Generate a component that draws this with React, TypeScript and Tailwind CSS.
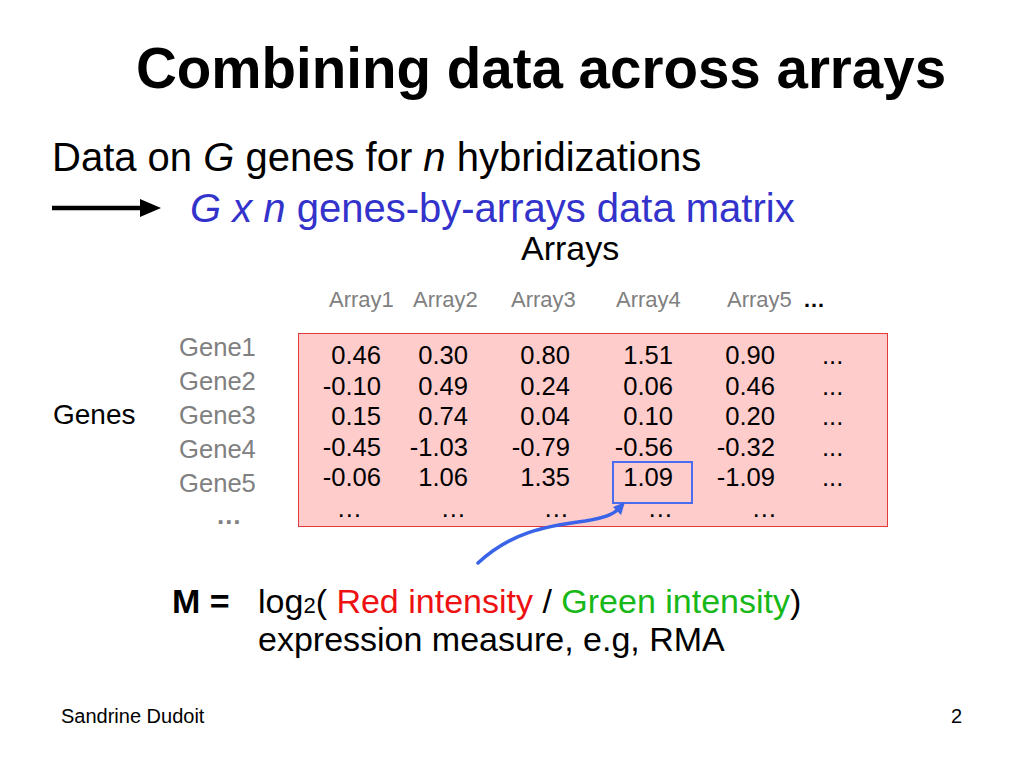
import React from 'react';

const values: string[][] = [
  ['0.46', '0.30', '0.80', '1.51', '0.90', '...'],
  ['-0.10', '0.49', '0.24', '0.06', '0.46', '...'],
  ['0.15', '0.74', '0.04', '0.10', '0.20', '...'],
  ['-0.45', '-1.03', '-0.79', '-0.56', '-0.32', '...'],
  ['-0.06', '1.06', '1.35', '1.09', '-1.09', '...'],
];

const genes = ['Gene1', 'Gene2', 'Gene3', 'Gene4', 'Gene5'];

// column right edges inside the pink box (box starts at x=299)
const colCls = [
  'w-[82px] text-right',
  'w-[87px] text-right',
  'w-[102px] text-right',
  'w-[103px] text-right',
  'w-[102px] text-right',
  'w-[70px] pl-[47px] text-left',
];

export default function App() {
  return (
    <div className="relative w-[1024px] h-[768px] bg-white text-black flex flex-col overflow-hidden font-['Liberation_Sans',Arial,Helvetica,sans-serif]">
      <h1 className="pt-[40px] pl-[136px] text-[56.5px] leading-[57px] font-bold">
        Combining data across arrays
      </h1>

      <p className="mt-[40px] pl-[52px] text-[40px] leading-[40px]">
        Data on <i>G</i> genes for <i>n</i> hybridizations
      </p>

      <div className="mt-[11px] flex items-center pl-[52px]">
        <svg width="110" height="40" viewBox="0 0 110 40" className="shrink-0">
          <line x1="0" y1="20" x2="92" y2="20" stroke="black" strokeWidth="4.5" />
          <polygon points="88,11 109,20 88,29" fill="black" />
        </svg>
        <p className="ml-[28px] text-[40px] leading-[40px] text-[#3333cc]">
          <i>G x n</i> genes-by-arrays data matrix
        </p>
      </div>

      <p className="mt-[3px] pl-[521px] text-[34px] leading-[34px]">Arrays</p>

      <div className="mt-[24px] flex pl-[329px] text-[22px] leading-[22px] text-[#808080]">
        <span className="w-[84px]">Array1</span>
        <span className="w-[98px]">Array2</span>
        <span className="w-[105px]">Array3</span>
        <span className="w-[111px]">Array4</span>
        <span className="w-[76px]">Array5</span>
        <span className="font-bold text-black">…</span>
      </div>

      <div className="mt-[22px] flex items-start">
        <span className="ml-[53px] mt-[68px] w-[126px] text-[28px] leading-[28px]">Genes</span>
        <div className="-mt-[3px] w-[119px] flex flex-col text-[25.6px] leading-[34px] text-[#808080]">
          {genes.map((g) => (
            <span key={g}>{g}</span>
          ))}
          <span className="ml-[37px] font-bold leading-[30px]">…</span>
        </div>
        <div className="relative w-[590px] h-[194px] border border-[#e23a3a] bg-[#ffcccc] pt-[6px] text-[25.6px] leading-[30.6px]">
          {values.map((row, i) => (
            <div key={i} className="flex">
              {row.map((v, j) => (
                <span key={j} className={colCls[j]}>
                  {v}
                </span>
              ))}
            </div>
          ))}
          <div className="flex">
            <span className="w-[82px] text-right pr-[19px]">…</span>
            <span className="w-[87px] text-right pr-[2px]">…</span>
            <span className="w-[102px] text-right pr-[1px]">…</span>
            <span className="w-[103px] text-right">…</span>
            <span className="w-[104px] text-right">…</span>
          </div>
          <div className="absolute left-[313px] top-[127px] w-[81px] h-[43px] border-2 border-[#4a6cf0]" />
        </div>
      </div>

      <div className="mt-[52px] flex pl-[172px] text-[34px] leading-[38px]">
        <span className="w-[86px] font-bold">M =</span>
        <div className="flex flex-col">
          <span>
            log<span className="text-[22px] leading-none">2</span>({' '}
            <span className="text-[#ee1111]">Red intensity</span> /{' '}
            <span className="text-[#17b817]">Green intensity</span>)
          </span>
          <span>expression measure, e.g, RMA</span>
        </div>
      </div>

      <div className="mt-auto flex justify-between pl-[61px] pr-[62px] pb-[42px] text-[20px] leading-[20px]">
        <span>Sandrine Dudoit</span>
        <span>2</span>
      </div>

      <svg
        className="absolute left-0 top-0 pointer-events-none"
        width="1024"
        height="768"
        viewBox="0 0 1024 768"
      >
        <path
          d="M478 563 C 510 533, 545 526, 585 521 C 605 518, 615 514, 619 508"
          fill="none"
          stroke="#3a64e8"
          strokeWidth="3.5"
          strokeLinecap="round"
        />
        <polygon points="613,507 625,502 621,515" fill="#3a64e8" />
      </svg>
    </div>
  );
}
